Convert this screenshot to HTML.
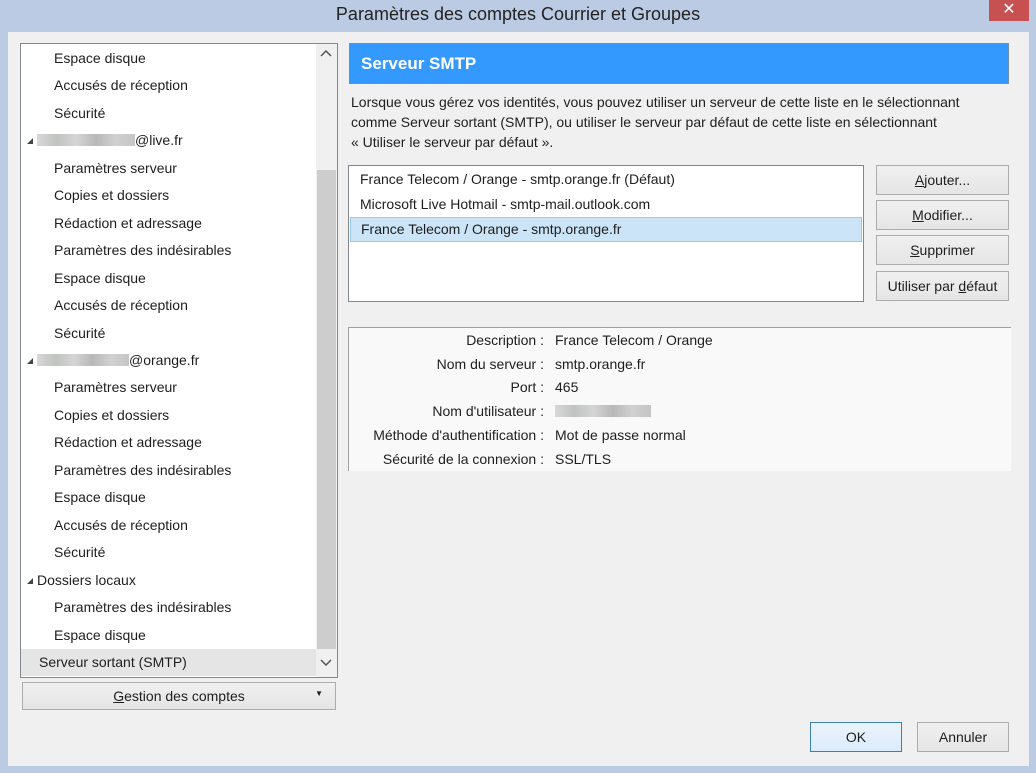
<!DOCTYPE html>
<html><head><meta charset="utf-8"><style>
*{box-sizing:border-box;margin:0;padding:0}
body{width:1036px;height:773px;background:#bccbe4;font-family:"Liberation Sans",sans-serif;font-size:14px;color:#1e1e1e;position:relative;overflow:hidden}
.abs{position:absolute}
.title{left:0;width:1036px;top:4px;text-align:center;font-size:18px;color:#222}
.close{left:989px;top:0;width:40px;height:21px;background:#c75050;color:#fff;text-align:center;font-size:16px;line-height:20px}
.client{left:8px;top:32px;width:1021px;height:734px;background:#f0f0f0}
.tree{left:20px;top:43px;width:318px;height:635px;background:#fff;border:1px solid #828790;overflow:hidden}
.row{position:absolute;left:0;height:27px;line-height:27px;white-space:nowrap}
.sb{left:316px;top:44px;width:21px;height:633px;background:#f0f0f0}
.thumb{left:317px;top:170px;width:19px;height:479px;background:#cdcdcd}
.blur{display:inline-block;height:12px;vertical-align:-1px;background:linear-gradient(90deg,#d8d8d8,#bfc3c0 20%,#d5d5d5 40%,#b8b8b8 60%,#d0d0d0 80%,#c5c5c5)}
.tri{display:inline-block;width:0;height:0;border-left:6px solid transparent;border-bottom:6px solid #444;vertical-align:1px;margin-right:4px}
.btn{position:absolute;background:linear-gradient(#f0f0f0,#e5e5e5);border:1px solid #acacac;text-align:center;font-size:14px}
u{text-decoration:underline}
.hdr{left:349px;top:43px;width:660px;height:41px;background:#3399ff;border:1px solid #6d8fb6;color:#fff;font-weight:bold;font-size:17px;line-height:40px;padding-left:11px}
.para{left:351px;top:92px;width:625px;line-height:20px;font-size:14px}
.list{left:348px;top:165px;width:516px;height:137px;background:#fff;border:1px solid #828790}
.li{position:absolute;left:1px;width:512px;height:25px;line-height:25px;padding-left:10px}
.det{left:348px;top:327px;width:663px;height:144px;background:#f9f9f9;border-top:1px solid #a0a0a0;border-left:1px solid #a0a0a0}
.dr{position:absolute;left:0;height:24px;line-height:24px;width:660px}
.dl{position:absolute;right:465px;text-align:right;white-space:nowrap}
.dv{position:absolute;left:206px;white-space:nowrap}
</style></head><body>
<div class="abs title">Paramètres des comptes Courrier et Groupes</div>
<div class="abs close">✕</div>
<div class="abs client"></div>

<div class="abs tree">
<div class="row" style="top:1px;left:33px">Espace disque</div>
<div class="row" style="top:28px;left:33px">Accusés de réception</div>
<div class="row" style="top:56px;left:33px">Sécurité</div>
<div class="row" style="top:83px;left:6px"><span class="tri"></span><span class="blur" style="width:98px"></span>@live.fr</div>
<div class="row" style="top:111px;left:33px">Paramètres serveur</div>
<div class="row" style="top:138px;left:33px">Copies et dossiers</div>
<div class="row" style="top:166px;left:33px">Rédaction et adressage</div>
<div class="row" style="top:193px;left:33px">Paramètres des indésirables</div>
<div class="row" style="top:221px;left:33px">Espace disque</div>
<div class="row" style="top:248px;left:33px">Accusés de réception</div>
<div class="row" style="top:276px;left:33px">Sécurité</div>
<div class="row" style="top:303px;left:6px"><span class="tri"></span><span class="blur" style="width:92px"></span>@orange.fr</div>
<div class="row" style="top:330px;left:33px">Paramètres serveur</div>
<div class="row" style="top:358px;left:33px">Copies et dossiers</div>
<div class="row" style="top:385px;left:33px">Rédaction et adressage</div>
<div class="row" style="top:413px;left:33px">Paramètres des indésirables</div>
<div class="row" style="top:440px;left:33px">Espace disque</div>
<div class="row" style="top:468px;left:33px">Accusés de réception</div>
<div class="row" style="top:495px;left:33px">Sécurité</div>
<div class="row" style="top:523px;left:6px"><span class="tri"></span>Dossiers locaux</div>
<div class="row" style="top:550px;left:33px">Paramètres des indésirables</div>
<div class="row" style="top:578px;left:33px">Espace disque</div>
<div class="row" style="top:605px;left:0;width:295px;background:#e5e5e5;padding-left:18px">Serveur sortant (SMTP)</div>
</div>
<div class="abs sb"></div>
<div class="abs thumb"></div>
<svg class="abs" style="left:320px;top:50px" width="12" height="8"><path d="M1 6 L6 1 L11 6" fill="none" stroke="#555" stroke-width="1.5"/></svg>
<svg class="abs" style="left:320px;top:658px" width="12" height="8"><path d="M1 2 L6 7 L11 2" fill="none" stroke="#555" stroke-width="1.5"/></svg>

<div class="btn" style="left:22px;top:682px;width:314px;height:28px;line-height:26px"><u>G</u>estion des comptes<span style="position:absolute;right:12px;top:-2px;font-size:8px">▼</span></div>

<div class="abs hdr">Serveur SMTP</div>
<div class="abs para">Lorsque vous gérez vos identités, vous pouvez utiliser un serveur de cette liste en le sélectionnant comme Serveur sortant (SMTP), ou utiliser le serveur par défaut de cette liste en sélectionnant<br>« Utiliser le serveur par défaut ».</div>

<div class="abs list">
<div class="li" style="top:1px">France Telecom / Orange - smtp.orange.fr (Défaut)</div>
<div class="li" style="top:26px">Microsoft Live Hotmail - smtp-mail.outlook.com</div>
<div class="li" style="top:51px;background:#cce4f7;border:1px solid #99c9ef;line-height:23px;padding-left:10px">France Telecom / Orange - smtp.orange.fr</div>
</div>

<div class="btn" style="left:876px;top:165px;width:133px;height:30px;line-height:28px"><u>A</u>jouter...</div>
<div class="btn" style="left:876px;top:200px;width:133px;height:30px;line-height:28px"><u>M</u>odifier...</div>
<div class="btn" style="left:876px;top:235px;width:133px;height:30px;line-height:28px"><u>S</u>upprimer</div>
<div class="btn" style="left:876px;top:271px;width:133px;height:30px;line-height:28px">Utiliser par <u>d</u>éfaut</div>

<div class="abs det">
<div class="dr" style="top:0"><span class="dl">Description :</span><span class="dv">France Telecom / Orange</span></div>
<div class="dr" style="top:24px"><span class="dl">Nom du serveur :</span><span class="dv">smtp.orange.fr</span></div>
<div class="dr" style="top:47px"><span class="dl">Port :</span><span class="dv">465</span></div>
<div class="dr" style="top:71px"><span class="dl">Nom d'utilisateur :</span><span class="dv"><span class="blur" style="width:96px"></span></span></div>
<div class="dr" style="top:95px"><span class="dl">Méthode d'authentification :</span><span class="dv">Mot de passe normal</span></div>
<div class="dr" style="top:119px"><span class="dl">Sécurité de la connexion :</span><span class="dv">SSL/TLS</span></div>
</div>

<div class="btn" style="left:810px;top:722px;width:92px;height:30px;line-height:28px;border-color:#3c7fb1;background:linear-gradient(#eaf3fb,#dcecfc)">OK</div>
<div class="btn" style="left:917px;top:722px;width:92px;height:30px;line-height:28px">Annuler</div>
</body></html>
